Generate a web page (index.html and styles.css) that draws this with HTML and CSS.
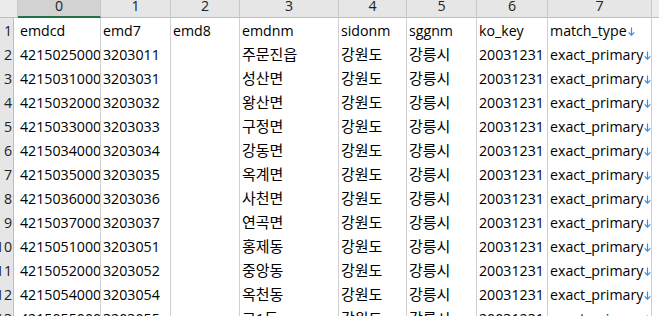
FILE: index.html
```html
<!DOCTYPE html>
<html>
<head>
<meta charset="utf-8">
<link rel="stylesheet" href="styles.css">
</head>
<body>
<div class="sheet">
  <div class="row head">
    <div class="h corner"></div>
    <div class="h sel">0</div>
    <div class="h">1</div>
    <div class="h">2</div>
    <div class="h">3</div>
    <div class="h">4</div>
    <div class="h">5</div>
    <div class="h">6</div>
    <div class="h">7</div>
    <div class="h rest"></div>
  </div>

  <div class="row"><div class="rn"><span>1</span></div><div class="gap"></div><div class="c">emdcd</div><div class="c">emd7</div><div class="c">emd8</div><div class="c">emdnm</div><div class="c">sidonm</div><div class="c">sggnm</div><div class="c">ko_key</div><div class="c">match_type<svg class="nl" width="7" height="9" viewBox="0 0 7 9"><path d="M3.5 0.5V8.2M0.7 5.3L3.5 8.2L6.3 5.3"/></svg></div><div class="rest"></div></div>

  <div class="row"><div class="rn"><span>2</span></div><div class="gap"></div><div class="c">4215025000</div><div class="c">3203011</div><div class="c"></div><div class="c ko">주문진읍</div><div class="c ko">강원도</div><div class="c ko">강릉시</div><div class="c">20031231</div><div class="c">exact_primary<svg class="nl" width="7" height="9" viewBox="0 0 7 9"><path d="M3.5 0.5V8.2M0.7 5.3L3.5 8.2L6.3 5.3"/></svg></div><div class="rest"></div></div>

  <div class="row"><div class="rn"><span>3</span></div><div class="gap"></div><div class="c">4215031000</div><div class="c">3203031</div><div class="c"></div><div class="c ko">성산면</div><div class="c ko">강원도</div><div class="c ko">강릉시</div><div class="c">20031231</div><div class="c">exact_primary<svg class="nl" width="7" height="9" viewBox="0 0 7 9"><path d="M3.5 0.5V8.2M0.7 5.3L3.5 8.2L6.3 5.3"/></svg></div><div class="rest"></div></div>

  <div class="row"><div class="rn"><span>4</span></div><div class="gap"></div><div class="c">4215032000</div><div class="c">3203032</div><div class="c"></div><div class="c ko">왕산면</div><div class="c ko">강원도</div><div class="c ko">강릉시</div><div class="c">20031231</div><div class="c">exact_primary<svg class="nl" width="7" height="9" viewBox="0 0 7 9"><path d="M3.5 0.5V8.2M0.7 5.3L3.5 8.2L6.3 5.3"/></svg></div><div class="rest"></div></div>

  <div class="row"><div class="rn"><span>5</span></div><div class="gap"></div><div class="c">4215033000</div><div class="c">3203033</div><div class="c"></div><div class="c ko">구정면</div><div class="c ko">강원도</div><div class="c ko">강릉시</div><div class="c">20031231</div><div class="c">exact_primary<svg class="nl" width="7" height="9" viewBox="0 0 7 9"><path d="M3.5 0.5V8.2M0.7 5.3L3.5 8.2L6.3 5.3"/></svg></div><div class="rest"></div></div>

  <div class="row"><div class="rn"><span>6</span></div><div class="gap"></div><div class="c">4215034000</div><div class="c">3203034</div><div class="c"></div><div class="c ko">강동면</div><div class="c ko">강원도</div><div class="c ko">강릉시</div><div class="c">20031231</div><div class="c">exact_primary<svg class="nl" width="7" height="9" viewBox="0 0 7 9"><path d="M3.5 0.5V8.2M0.7 5.3L3.5 8.2L6.3 5.3"/></svg></div><div class="rest"></div></div>

  <div class="row"><div class="rn"><span>7</span></div><div class="gap"></div><div class="c">4215035000</div><div class="c">3203035</div><div class="c"></div><div class="c ko">옥계면</div><div class="c ko">강원도</div><div class="c ko">강릉시</div><div class="c">20031231</div><div class="c">exact_primary<svg class="nl" width="7" height="9" viewBox="0 0 7 9"><path d="M3.5 0.5V8.2M0.7 5.3L3.5 8.2L6.3 5.3"/></svg></div><div class="rest"></div></div>

  <div class="row"><div class="rn"><span>8</span></div><div class="gap"></div><div class="c">4215036000</div><div class="c">3203036</div><div class="c"></div><div class="c ko">사천면</div><div class="c ko">강원도</div><div class="c ko">강릉시</div><div class="c">20031231</div><div class="c">exact_primary<svg class="nl" width="7" height="9" viewBox="0 0 7 9"><path d="M3.5 0.5V8.2M0.7 5.3L3.5 8.2L6.3 5.3"/></svg></div><div class="rest"></div></div>

  <div class="row"><div class="rn"><span>9</span></div><div class="gap"></div><div class="c">4215037000</div><div class="c">3203037</div><div class="c"></div><div class="c ko">연곡면</div><div class="c ko">강원도</div><div class="c ko">강릉시</div><div class="c">20031231</div><div class="c">exact_primary<svg class="nl" width="7" height="9" viewBox="0 0 7 9"><path d="M3.5 0.5V8.2M0.7 5.3L3.5 8.2L6.3 5.3"/></svg></div><div class="rest"></div></div>

  <div class="row"><div class="rn"><span>10</span></div><div class="gap"></div><div class="c">4215051000</div><div class="c">3203051</div><div class="c"></div><div class="c ko">홍제동</div><div class="c ko">강원도</div><div class="c ko">강릉시</div><div class="c">20031231</div><div class="c">exact_primary<svg class="nl" width="7" height="9" viewBox="0 0 7 9"><path d="M3.5 0.5V8.2M0.7 5.3L3.5 8.2L6.3 5.3"/></svg></div><div class="rest"></div></div>

  <div class="row"><div class="rn"><span>11</span></div><div class="gap"></div><div class="c">4215052000</div><div class="c">3203052</div><div class="c"></div><div class="c ko">중앙동</div><div class="c ko">강원도</div><div class="c ko">강릉시</div><div class="c">20031231</div><div class="c">exact_primary<svg class="nl" width="7" height="9" viewBox="0 0 7 9"><path d="M3.5 0.5V8.2M0.7 5.3L3.5 8.2L6.3 5.3"/></svg></div><div class="rest"></div></div>

  <div class="row"><div class="rn"><span>12</span></div><div class="gap"></div><div class="c">4215054000</div><div class="c">3203054</div><div class="c"></div><div class="c ko">옥천동</div><div class="c ko">강원도</div><div class="c ko">강릉시</div><div class="c">20031231</div><div class="c">exact_primary<svg class="nl" width="7" height="9" viewBox="0 0 7 9"><path d="M3.5 0.5V8.2M0.7 5.3L3.5 8.2L6.3 5.3"/></svg></div><div class="rest"></div></div>

  <div class="row"><div class="rn"><span>13</span></div><div class="gap"></div><div class="c">4215055000</div><div class="c">3203055</div><div class="c"></div><div class="c ko">교1동</div><div class="c ko">강원도</div><div class="c ko">강릉시</div><div class="c">20031231</div><div class="c">exact_primary<svg class="nl" width="7" height="9" viewBox="0 0 7 9"><path d="M3.5 0.5V8.2M0.7 5.3L3.5 8.2L6.3 5.3"/></svg></div><div class="rest"></div></div>
</div>
</body>
</html>
```
FILE: styles.css
```css
html, body {
  margin: 0;
  padding: 0;
}
body {
  width: 659px;
  height: 316px;
  overflow: hidden;
  background: #ffffff;
  font-family: "Open Sans", "Noto Sans CJK KR", sans-serif;
  font-size: 14.2px;
  color: #000000;
}
.sheet {
  display: flex;
  flex-direction: column;
}
.row {
  display: grid;
  grid-template-columns: 14px 4px 83px 70px 69px 99px 68px 70px 71px 104px 1fr;
  height: 24px;
  flex: none;
}
.row.head {
  height: 18px;
}
.h {
  box-sizing: border-box;
  height: 18px;
  background: #e6e6e6;
  border-right: 1px solid #c8c8c8;
  border-bottom: 1px solid #bdbdbd;
  text-align: center;
  line-height: 11px;
  color: #222222;
  overflow: hidden;
}
.h.corner {
  grid-column: span 2;
  background: #ececec;
}
.h.sel {
  background: #d2d2d2;
  border-bottom: 2px solid #217346;
}
.h.rest {
  border-right: none;
  background: #ececec;
}
.rn {
  box-sizing: border-box;
  background: #e6e6e6;
  border-right: 1px solid #bdbdbd;
  display: flex;
  justify-content: flex-end;
  overflow: hidden;
  padding-right: 1px;
  line-height: 25px;
  color: #222222;
}
.rn span {
  flex: none;
}
.c {
  box-sizing: border-box;
  border-right: 1px solid #d0d0d0;
  padding-left: 2px;
  line-height: 25px;
  white-space: nowrap;
  overflow: hidden;
}
.ko {
  font-size: 15px;
}
.nl {
  margin-left: 1px;
  vertical-align: baseline;
  fill: none;
  stroke: #3b8be0;
  stroke-width: 1.2;
}
```
